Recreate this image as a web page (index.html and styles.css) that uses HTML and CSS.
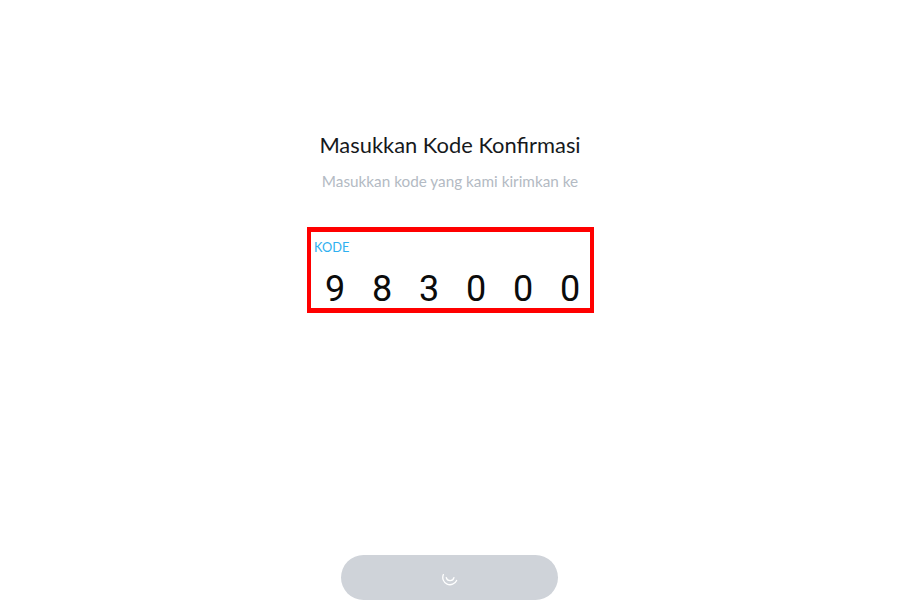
FILE: index.html
```html
<!DOCTYPE html>
<html lang="id">
<head>
    <meta charset="UTF-8">
    <meta name="viewport" content="width=device-width, initial-scale=1.0">
    <title>Masukkan Kode Konfirmasi</title>
    <link rel="stylesheet" href="styles.css">
</head>
<body>
    <main class="page">
        <h1 class="title">Masukkan Kode Konfirmasi</h1>
        <p class="subtitle">Masukkan kode yang kami kirimkan ke</p>
        <div class="code-box">
            <span class="code-label">KODE</span>
            <div class="digits">
                <span class="digit">9</span>
                <span class="digit">8</span>
                <span class="digit">3</span>
                <span class="digit">0</span>
                <span class="digit">0</span>
                <span class="digit">0</span>
            </div>
        </div>
        <button class="submit" type="button" aria-label="Memuat">
            <svg class="spinner" width="16" height="14" viewBox="0 0 16 14" fill="none" stroke="#fff" stroke-linecap="round">
                <path d="M1.4 2.6A7 7 0 0 0 14.6 8.4" stroke-width="1.3"/>
                <path d="M4.2 5.5A4 4 0 0 0 12 5.5" stroke-width="1.2"/>
            </svg>
        </button>
    </main>
</body>
</html>
```

FILE: styles.css
```css
* {
    box-sizing: border-box;
}
body {
    margin: 0;
    background: #fff;
    font-family: Lato, "Open Sans", sans-serif;
}
.page {
    height: 605px;
    padding: 132px 0 5px;
    display: flex;
    flex-direction: column;
    align-items: center;
}
.title {
    margin: 0;
    font-size: 21.9px;
    line-height: 26px;
    font-weight: 400;
    color: #16191c;
}
.subtitle {
    margin: 11px 0 0;
    font-size: 15.3px;
    line-height: 24px;
    color: #b3bac3;
}
.code-box {
    width: 287px;
    height: 86px;
    margin: 34px 0 0 1px;
    padding: 7px 3px 0;
    border-style: solid;
    border-color: #ff0000;
    border-width: 5px 4px;
}
.code-label {
    display: block;
    font-size: 12.8px;
    line-height: 16px;
    color: #2eb0f0;
}
.digits {
    display: flex;
    gap: 17px;
    margin-top: 14px;
    padding-left: 6px;
}
.digit {
    width: 30px;
    font-family: Roboto, sans-serif;
    font-size: 36px;
    line-height: 40px;
    text-align: center;
    color: #0b0b0b;
}
.submit {
    width: 217px;
    height: 45px;
    margin: auto 1px 0 0;
    border: none;
    border-radius: 23px;
    background: #cfd3d9;
    display: flex;
    align-items: center;
    justify-content: center;
}
.spinner {
    display: block;
    margin-top: 2px;
}
```
